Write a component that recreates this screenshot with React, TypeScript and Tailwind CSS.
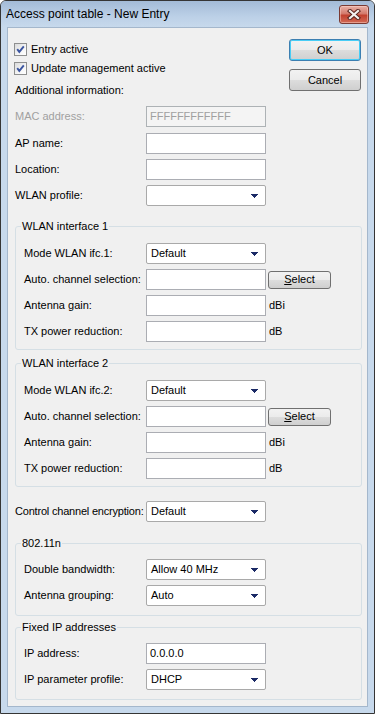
import React from "react";

const FONT = "font-['Liberation_Sans',Arial,sans-serif]";

function Arrow() {
  return (
    <svg width="7" height="4" viewBox="0 0 7 4" shapeRendering="crispEdges">
      <path d="M0 0h7v1h-1v1h-1v1h-1v1h-1v-1h-1v-1h-1v-1h-1z" fill="#1b2a66" />
    </svg>
  );
}

function CheckBox() {
  return (
    <div className="w-[13px] h-[13px] border border-[#8e8f8f] bg-[linear-gradient(135deg,#d9dadb,#f6f6f6_60%,#ffffff)] flex items-center justify-center">
      <svg width="11" height="11" viewBox="0 0 11 11">
        <path d="M2.2 5.2 L4.3 7.9 L8.8 2.3" fill="none" stroke="#3b55a0" strokeWidth="1.9" />
      </svg>
    </div>
  );
}

function TextBox({ value, disabled }: { value?: string; disabled?: boolean }) {
  return (
    <div
      className={`w-[120px] h-[21px] border flex items-center px-[3px] text-[11px] ${
        disabled ? "border-[#adb2b5] bg-[#f4f4f4] text-[#a0a0a0]" : "border-[#abadb3] bg-white text-black"
      }`}
    >
      {value}
    </div>
  );
}

function Combo({ value }: { value?: string }) {
  return (
    <div className="w-[120px] h-[21px] border border-[#a9a9a9] rounded-[2px] bg-white flex items-center justify-between pl-[4px] pr-[7px] text-[11px] text-black">
      <span>{value}</span>
      <Arrow />
    </div>
  );
}

function SelectButton() {
  return (
    <div className="ml-[2px] w-[63px] h-[18px] border border-[#707070] rounded-[3px] bg-[linear-gradient(#f2f2f2_0%,#ebebeb_50%,#dddddd_51%,#cfcfcf_100%)] flex items-center justify-center text-[11px] text-black">
      <span>
        <span className="underline">S</span>elect
      </span>
    </div>
  );
}

function Group({ title, children, bodyClass, className }: { title: string; children: React.ReactNode; bodyClass: string; className: string }) {
  return (
    <fieldset className={`ml-[7px] w-[347px] border border-[#d5dfe5] rounded-[3px] p-0 ${className}`}>
      <legend className="ml-[5px] px-[1px] leading-[15px] text-[11px] text-black">{title}</legend>
      <div className={`pl-[8px] flex flex-col ${bodyClass}`}>{children}</div>
    </fieldset>
  );
}

function GroupRows({ n }: { n: string }) {
  return (
    <>
      <div className="h-[21px] flex items-center">
        <div className="w-[122px] text-[11px]">Mode WLAN ifc.{n}:</div>
        <Combo value="Default" />
      </div>
      <div className="mt-[5px] h-[21px] flex items-center">
        <div className="w-[122px] text-[11px]">Auto. channel selection:</div>
        <TextBox />
        <SelectButton />
      </div>
      <div className="mt-[5px] h-[21px] flex items-center">
        <div className="w-[122px] text-[11px]">Antenna gain:</div>
        <TextBox />
        <span className="ml-[3px] text-[11px]">dBi</span>
      </div>
      <div className="mt-[5px] h-[21px] flex items-center">
        <div className="w-[122px] text-[11px]">TX power reduction:</div>
        <TextBox />
        <span className="ml-[3px] text-[11px]">dB</span>
      </div>
    </>
  );
}

export default function App() {
  return (
    <div className={`${FONT} w-[375px] h-[714px] bg-white`}>
      <div className="w-[375px] h-[714px] border border-[#353535] rounded-t-[6px] bg-[#c7d9ec] flex flex-col overflow-hidden">
        {/* Title bar */}
        <div className="h-[26px] bg-[linear-gradient(#a3bbd7,#bcd0e7_60%,#c7d9ec)] flex items-center justify-between pl-[5px] pr-[5px]">
          <span className="text-[12px] text-black">Access point table - New Entry</span>
          <div className="w-[30px] h-[19px] rounded-[3px] border border-[#7a3a33] bg-[linear-gradient(#e8b1a7,#d47a6c_45%,#c2412f_55%,#d26a55)] flex items-center justify-center shadow-[inset_0_0_0_1px_rgba(255,220,210,0.45)]">
            <svg width="14" height="11" viewBox="0 0 14 11">
              <path d="M3 2 L11 9 M11 2 L3 9" stroke="#5a2620" strokeWidth="4.2" strokeLinecap="square" />
              <path d="M3 2 L11 9 M11 2 L3 9" stroke="#f4f1f0" strokeWidth="2.2" strokeLinecap="square" />
            </svg>
          </div>
        </div>

        {/* Content */}
        <div className="flex-1 mx-[6px] mb-[6px] border border-[#a4b7cc] bg-[#f0f0f0] flex flex-col text-black text-[11px]">
          {/* Top section */}
          <div className="flex items-start">
            <div className="pt-[12px] pl-[6px] flex flex-col">
              <div className="h-[19px] flex items-center gap-[4px]">
                <CheckBox />
                <span>Entry active</span>
              </div>
              <div className="h-[19px] flex items-center gap-[4px]">
                <CheckBox />
                <span>Update management active</span>
              </div>
              <div className="mt-[3px] h-[19px] flex items-center pl-[1px]">Additional information:</div>
            </div>
            <div className="ml-auto mr-[6px] pt-[11px] flex flex-col">
              <div className="w-[72px] h-[22px] border border-[#3c7fb1] rounded-[3px] shadow-[inset_0_0_0_1px_#48cdf6] bg-[linear-gradient(#f2f2f2_0%,#ebebeb_50%,#dddddd_51%,#cfcfcf_100%)] flex items-center justify-center">
                OK
              </div>
              <div className="mt-[8px] w-[72px] h-[22px] border border-[#707070] rounded-[3px] bg-[linear-gradient(#f2f2f2_0%,#ebebeb_50%,#dddddd_51%,#cfcfcf_100%)] flex items-center justify-center">
                Cancel
              </div>
            </div>
          </div>

          {/* Basic rows */}
          <div className="pl-[7px] flex flex-col">
            <div className="mt-[6px] h-[21px] flex items-center">
              <div className="w-[131px] text-[#a0a0a0]">MAC address:</div>
              <TextBox value="FFFFFFFFFFFF" disabled />
            </div>
            <div className="mt-[6px] h-[21px] flex items-center">
              <div className="w-[131px]">AP name:</div>
              <TextBox />
            </div>
            <div className="mt-[5px] h-[21px] flex items-center">
              <div className="w-[131px]">Location:</div>
              <TextBox />
            </div>
            <div className="mt-[5px] h-[21px] flex items-center">
              <div className="w-[131px]">WLAN profile:</div>
              <Combo />
            </div>
          </div>

          <Group title="WLAN interface 1" className="mt-[13px]" bodyClass="pt-[9px] pb-[7px]">
            <GroupRows n="1" />
          </Group>

          <Group title="WLAN interface 2" className="mt-[6px]" bodyClass="pt-[9px] pb-[7px]">
            <GroupRows n="2" />
          </Group>

          <div className="pl-[7px] mt-[14px] h-[21px] flex items-center">
            <div className="w-[131px] whitespace-nowrap tracking-[-0.2px]">Control channel encryption:</div>
            <Combo value="Default" />
          </div>

          <Group title="802.11n" className="mt-[14px]" bodyClass="pt-[8px] pb-[9px]">
            <div className="h-[21px] flex items-center">
              <div className="w-[122px]">Double bandwidth:</div>
              <Combo value="Allow 40 MHz" />
            </div>
            <div className="mt-[5px] h-[21px] flex items-center">
              <div className="w-[122px]">Antenna grouping:</div>
              <Combo value="Auto" />
            </div>
          </Group>

          <Group title="Fixed IP addresses" className="mt-[4px]" bodyClass="pt-[8px] pb-[9px]">
            <div className="h-[21px] flex items-center">
              <div className="w-[122px]">IP address:</div>
              <TextBox value="0.0.0.0" />
            </div>
            <div className="mt-[5px] h-[21px] flex items-center">
              <div className="w-[122px]">IP parameter profile:</div>
              <Combo value="DHCP" />
            </div>
          </Group>
        </div>
      </div>
    </div>
  );
}
